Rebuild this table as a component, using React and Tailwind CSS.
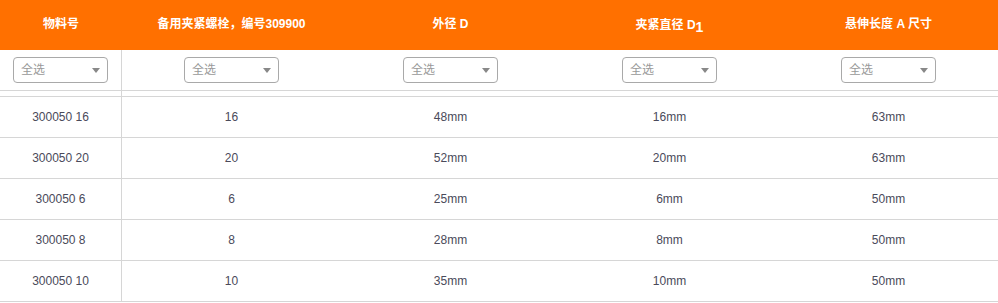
import React from "react";

const headers = ["物料号", "备用夹紧螺栓，编号309900", "外径 D", "夹紧直径 D1", "悬伸长度 A 尺寸"];

const rows = [
  ["300050 16", "16", "48mm", "16mm", "63mm"],
  ["300050 20", "20", "52mm", "20mm", "63mm"],
  ["300050 6", "6", "25mm", "6mm", "50mm"],
  ["300050 8", "8", "28mm", "8mm", "50mm"],
  ["300050 10", "10", "35mm", "10mm", "50mm"],
];

function FilterSelect() {
  return (
    <div className="w-[95px] h-[26px] border border-[#a9a9a9] rounded-[4px] flex items-center justify-between pl-[7px] pr-[7px] bg-white">
      <span className="text-[12px] text-[#999]">全选</span>
      <span className="w-0 h-0 border-l-[4px] border-r-[4px] border-t-[5px] border-l-transparent border-r-transparent border-t-[#888]" />
    </div>
  );
}

function HeaderLabel({ text }) {
  if (text === "夹紧直径 D1") {
    return (
      <span>
        夹紧直径 D<span className="text-[14px] relative top-[3px]">1</span>
      </span>
    );
  }
  return <span>{text}</span>;
}

export default function App() {
  const cellBorder = (i) => (i === 0 ? "border-r border-[#d6d6d6]" : "");

  return (
    <div className="w-[998px] bg-white font-['Liberation_Sans','Noto_Sans_CJK_SC',sans-serif]">
      <div className="grid grid-cols-[122px_repeat(4,1fr)] h-[50px] bg-[#ff7000] text-white text-[12px] font-bold">
        {headers.map((h, i) => (
          <div key={i} className="flex items-center justify-center pb-[2px]">
            <HeaderLabel text={h} />
          </div>
        ))}
      </div>

      <div className="grid grid-cols-[122px_repeat(4,1fr)] h-[40px]">
        {headers.map((h, i) => (
          <div key={i} className={`flex items-center justify-center ${cellBorder(i)}`}>
            <FilterSelect />
          </div>
        ))}
      </div>

      <div className="grid grid-cols-[122px_repeat(4,1fr)] h-[6px] border-t border-[#d6d6d6]">
        {headers.map((h, i) => (
          <div key={i} className={cellBorder(i)} />
        ))}
      </div>

      {rows.map((r, ri) => (
        <div key={ri} className="grid grid-cols-[122px_repeat(4,1fr)] h-[41px] border-t border-[#d6d6d6] text-[12px] text-[#4a4a5a]">
          {r.map((c, i) => (
            <div key={i} className={`flex items-center justify-center ${cellBorder(i)}`}>
              {c}
            </div>
          ))}
        </div>
      ))}
      <div className="border-t border-[#d6d6d6]" />
    </div>
  );
}
